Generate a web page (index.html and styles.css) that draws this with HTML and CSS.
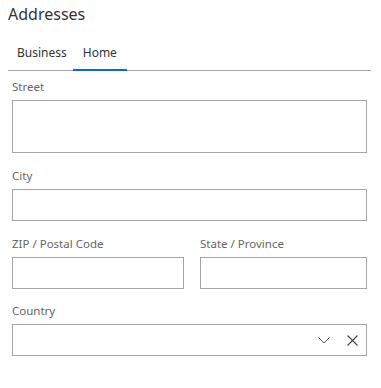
FILE: index.html
```html
<!DOCTYPE html>
<html>
<head>
<meta charset="utf-8">
<link rel="stylesheet" href="styles.css">
</head>
<body>
<div class="panel">
  <h1 class="title">Addresses</h1>
  <div class="tabs">
    <div class="tab">Business</div>
    <div class="tab active">Home</div>
  </div>
  <div class="form">
    <div class="field">
      <label class="label">Street</label>
      <div class="box box-tall"></div>
    </div>
    <div class="field">
      <label class="label">City</label>
      <div class="box"></div>
    </div>
    <div class="row">
      <div class="field">
        <label class="label">ZIP / Postal Code</label>
        <div class="box"></div>
      </div>
      <div class="field">
        <label class="label">State / Province</label>
        <div class="box"></div>
      </div>
    </div>
    <div class="field">
      <label class="label">Country</label>
      <div class="box select">
        <svg class="icon chev" width="12" height="7" viewBox="0 0 12 7"><path d="M0.5 0.5 L6 6 L11.5 0.5" fill="none" stroke="#555" stroke-width="1"/></svg>
        <svg class="icon close" width="11" height="11" viewBox="0 0 11 11"><path d="M0.5 0.5 L10.5 10.5 M10.5 0.5 L0.5 10.5" fill="none" stroke="#444" stroke-width="1.1"/></svg>
      </div>
    </div>
  </div>
</div>
</body>
</html>
```

FILE: styles.css
```css
* { box-sizing: border-box; }
html, body { margin: 0; background: #fff; }
body {
  padding: 0 10px 0 8px;
  font-family: "Noto Sans", "Open Sans", sans-serif;
  color: #333;
}
.panel { width: 363px; }
.title {
  margin: 0;
  padding-top: 3px;
  font-size: 16px;
  font-weight: 400;
  line-height: 22px;
  color: #333;
}
.tabs {
  display: flex;
  margin-top: 19px;
  border-bottom: 1px solid #a6a6a6;
}
.tab {
  font-size: 12px;
  line-height: 17px;
  padding: 0 6px 8px 9px;
  color: #333;
  margin-bottom: -1px;
  border-bottom: 2px solid transparent;
}
.tab.active {
  border-bottom-color: #0f6cbd;
  padding: 0 10px 8px 10px;
}
.form {
  padding: 8px 4px 0 4px;
  display: flex;
  flex-direction: column;
  gap: 15px;
}
.field { display: flex; flex-direction: column; }
.label {
  font-size: 11.5px;
  line-height: 16px;
  color: #666;
  margin-bottom: 5px;
}
.box {
  height: 32px;
  border: 1px solid #a6a6a6;
  background: #fff;
}
.box-tall { height: 53px; }
.row {
  display: grid;
  grid-template-columns: 172px 167px;
  gap: 16px;
  margin-bottom: -1px;
}
.select {
  display: flex;
  align-items: center;
  justify-content: flex-end;
  padding-right: 8px;
  gap: 17px;
}
.icon { display: block; }
.chev { margin-top: 1px; }
```
